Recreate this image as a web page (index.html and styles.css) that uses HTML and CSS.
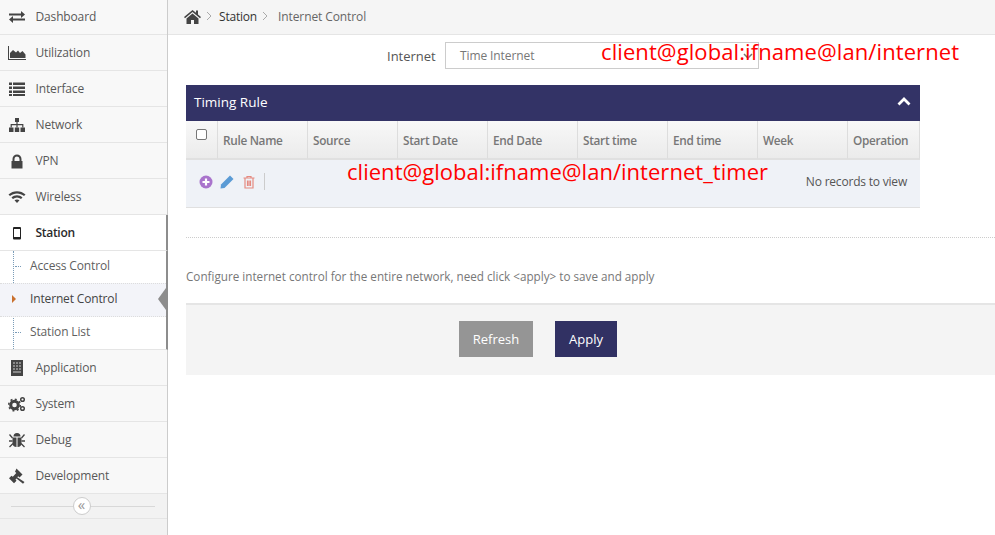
FILE: index.html
```html
<!DOCTYPE html>
<html>
<head>
<meta charset="UTF-8">
<title>Internet Control</title>
<link rel="stylesheet" href="styles.css">
</head>
<body>
	<div class="page">
		<!-- left menu -->
		<div class="sidebar">
			<div class="menu first">
				<svg class="icon" viewBox="0 0 18 18"><path d="M1 5.500h12V3l4 3.500-4 3.500V7.500H1zM17 10.500v2H5V15l-4-3.500L5 8v2.500z" fill="#444"/></svg>
				<span>Dashboard</span>
			</div>
			<div class="menu">
				<svg class="icon" viewBox="0 0 18 18"><path d="M0 2h1v13h17v1H0z" fill="#444"/><path d="M2 14V9l3-3 3 2.500 2-2 2 2.500 2.500-2 3 3.500V14z" fill="#444"/></svg>
				<span>Utilization</span>
			</div>
			<div class="menu">
				<svg class="icon" viewBox="0 0 18 18"><path d="M1 2.500h3v2.500H1zM5 2.500h12v2.500H5zM1 6.500h3V9H1zM5 6.500h12V9H5zM1 10.500h3V13H1zM5 10.500h12V13H5zM1 14h3v2H1zM5 14h12v2H5z" fill="#444"/></svg>
				<span>Interface</span>
			</div>
			<div class="menu">
				<svg class="icon" viewBox="0 0 18 18"><path d="M7 2h4v4H7zM1 11.500h4.500V16H1zM6.800 11.500h4.400V16H6.800zM12.500 11.500H17V16h-4.500z" fill="#444"/><path d="M9 6v5.500M3.200 11.500V8.700h11.600v2.800" fill="none" stroke="#444" stroke-width="1.200"/></svg>
				<span>Network</span>
			</div>
			<div class="menu">
				<svg class="icon" viewBox="0 0 18 18"><path d="M4.500 9V7a4.500 4.500 0 0 1 9 0v2h1v7.500h-11V9zM6.500 9h5V7a2.500 2.500 0 0 0-5 0z" fill="#444"/></svg>
				<span>VPN</span>
			</div>
			<div class="menu">
				<svg class="icon" viewBox="0 0 18 18"><path d="M.5 6.500C5 2 13 2 17.500 6.500l-1.500 1.500C12 4.500 6 4.500 2 8zM3.500 9.500c3-3 8-3 11 0L13 11c-2.500-2-5.500-2-8 0zM6.500 12.300c1.500-1.200 3.500-1.200 5 0L9 15z" fill="#444"/></svg>
				<span>Wireless</span>
			</div>
			<div class="menu active">
				<svg class="icon" viewBox="0 0 18 18"><path d="M6.500 3h5.500a1 1 0 0 1 1 1v10.500a1 1 0 0 1-1 1H6a1 1 0 0 1-1-1V4a1 1 0 0 1 1-1zM6 5v8h6V5z" fill="#222"/></svg>
				<span>Station</span>
			</div>
			<div class="submenu">
				<div class="subitem">Access Control</div>
				<div class="subitem current">Internet Control</div>
				<div class="subitem">Station List</div>
			</div>
			<div class="menu">
				<svg class="icon" viewBox="0 0 18 18"><path d="M3 1h12v16H3z" fill="#444"/><path d="M5 3h2v2H5zM8 3h2v2H8zM11 3h2v2h-2zM5 6h2v2H5zM8 6h2v2H8zM11 6h2v2h-2zM5 9h2v2H5zM8 9h2v2H8zM11 9h2v2h-2zM5 12h8v2H5z" fill="#888"/></svg>
				<span>Application</span>
			</div>
			<div class="menu">
				<svg class="icon" viewBox="0 0 18 18"><circle cx="6.500" cy="10" r="3.800" fill="none" stroke="#444" stroke-width="3"/><circle cx="6.500" cy="10" r="5.800" fill="none" stroke="#444" stroke-width="1.500" stroke-dasharray="2 2.500"/><circle cx="14.500" cy="4.500" r="1.800" fill="none" stroke="#444" stroke-width="1.500"/><circle cx="14.500" cy="13.500" r="1.800" fill="none" stroke="#444" stroke-width="1.500"/></svg>
				<span>System</span>
			</div>
			<div class="menu">
				<svg class="icon" viewBox="0 0 18 18"><path d="M5.500 5.500a3.500 3.500 0 0 1 7 0zM4.500 6.500h4V16c-2.500 0-4-1.500-4-4zM9.500 6.500h4V12c0 2.500-1.500 4-4 4z" fill="#444"/><path d="M1.500 3.500l3 3.500M16.500 3.500l-3 3.500M1 10h3.500M17 10h-3.500M1.500 16l3.500-3.500M16.500 16L13 12.500" stroke="#444" stroke-width="1.300"/></svg>
				<span>Debug</span>
			</div>
			<div class="menu">
				<svg class="icon" viewBox="0 0 18 18"><path d="M8.500 1.500l6 6-3 3-1.300-1.300-1 1L16.500 15l-1.500 1.800-6.500-5.300-1 1 1 1.300-2.500 2.500-5-5 2.500-2.500 1.300 1 3.500-3.800-1.300-1.200z" fill="#444"/></svg>
				<span>Development</span>
			</div>
			<div class="collapse">
				<div class="collapse-btn">«</div>
			</div>
		</div>

		<!-- right content -->
		<div class="content">
			<div class="crumbs">
				<svg class="home" viewBox="0 0 17 15"><path d="M8.500 1L0 8l1 1.200L8.500 3l7.500 6.200L17 8l-3-2.500V1.500h-2v2.300zM2.500 9.500V15h4.500v-4h3v4h4.500V9.500l-6-5z" fill="#444"/></svg>
				<svg class="sep" viewBox="0 0 6 10"><path d="M1 1l4 4-4 4" fill="none" stroke="#aaa"/></svg>
				<span class="crumb">Station</span>
				<svg class="sep" viewBox="0 0 6 10"><path d="M1 1l4 4-4 4" fill="none" stroke="#aaa"/></svg>
				<span class="crumb last">Internet Control</span>
			</div>

			<div class="form-row">
				<label class="form-label">Internet</label>
				<div class="select">
					<span>Time Internet</span>
					<svg class="caret" viewBox="0 0 10 6"><path d="M1 1l4 4 4-4" fill="none" stroke="#777" stroke-width="1.500"/></svg>
				</div>
			</div>

			<div class="panel">
				<div class="panel-head">
					<span>Timing Rule</span>
					<svg class="chevron" viewBox="0 0 14 9"><path d="M1.500 7.500L7 2l5.500 5.500" fill="none" stroke="#fff" stroke-width="2.800"/></svg>
				</div>
				<table class="grid">
					<tr>
						<th class="check"><span class="checkbox"></span></th>
						<th>Rule Name</th>
						<th>Source</th>
						<th>Start Date</th>
						<th>End Date</th>
						<th>Start time</th>
						<th>End time</th>
						<th>Week</th>
						<th class="op">Operation</th>
					</tr>
				</table>
				<div class="toolbar">
					<svg class="tool add" viewBox="0 0 14 14"><circle cx="7" cy="7" r="6.500" fill="#a974cc"/><path d="M3.500 7h7M7 3.500v7" stroke="#fff" stroke-width="2.200"/></svg>
					<svg class="tool" viewBox="0 0 14 14"><path d="M10 .5l3.500 3.500-9 9L.5 13.500l.5-4z" fill="#5b9bd5"/></svg>
					<svg class="tool" viewBox="0 0 14 14"><path d="M1.500 3h11M5 3V1.500h4V3M3 3v10h8V3M5.500 5.500v5.500M7 5.500v5.500M8.500 5.500v5.500" fill="none" stroke="#e58a80" stroke-width="1.200"/></svg>
					<span class="tool-sep"></span>
					<span class="no-records">No records to view</span>
				</div>
			</div>

			<div class="dots"></div>

			<p class="hint">Configure internet control for the entire network, need click &lt;apply&gt; to save and apply</p>

			<div class="actions">
				<button class="btn gray">Refresh</button>
				<button class="btn navy">Apply</button>
			</div>

			<div class="note note-top">client@global:ifname@lan/internet</div>
			<div class="note note-mid">client@global:ifname@lan/internet_timer</div>
		</div>
	</div>
</body>
</html>
```

FILE: styles.css
```css
/* whole page */
* {
	box-sizing: border-box;
}

html, body {
	margin: 0;
	height: 100%;
	overflow: hidden;
}

body {
	font-family: "Open Sans", "Liberation Sans", sans-serif;
	font-size: 13px;
	color: #666;
	background: #fff;
}

.page {
	display: flex;
	height: 535px;
}

/* left menu */
.sidebar {
	width: 168px;
	flex: none;
	font-size: 12px;
	background: #f2f2f2;
	border-right: 1px solid #ccc;
}

.menu {
	display: flex;
	align-items: center;
	height: 36px;
	padding-left: 8px;
	padding-bottom: 1px;
	letter-spacing: -0.150px;
	background: #f8f8f8;
	border-bottom: 1px solid #e5e5e5;
	color: #585858;
}

.menu.first {
	height: 35px;
}

.menu.active {
	background: #fff;
	color: #2b2b2b;
	font-weight: 600;
	letter-spacing: -0.300px;
	margin-right: -1px;
	border-right: 2px solid #8d8d8d;
}

.icon {
	width: 18px;
	height: 18px;
	margin: 1px 9.500px 0 0;
	flex: none;
}

.submenu {
	position: relative;
	background: #fff;
	border-bottom: 1px solid #e5e5e5;
	border-right: 2px solid #8d8d8d;
	margin-right: -1px;
}

.submenu::before {
	content: "";
	position: absolute;
	left: 13px;
	top: 0;
	bottom: 0;
	border-left: 1px dotted #7a9cb8;
}

.subitem {
	position: relative;
	height: 32px;
	line-height: 30px;
	padding-left: 30px;
	letter-spacing: -0.150px;
	color: #5f5f5f;
}

.subitem::before {
	content: "";
	position: absolute;
	left: 15px;
	top: 15px;
	width: 6px;
	border-top: 1px dotted #7a9cb8;
}

.subitem.current {
	height: 34px;
	background: #f3f4f9;
	border-top: 1px dotted #ddd;
	border-bottom: 1px dotted #ddd;
	color: #444;
}

.subitem.current::before {
	left: 12px;
	top: 11px;
	width: 0;
	border-top: 4px solid transparent;
	border-bottom: 4px solid transparent;
	border-left: 4px solid #c9702e;
}

.subitem.current::after {
	content: "";
	position: absolute;
	right: 0;
	top: 4px;
	border-top: 11px solid transparent;
	border-bottom: 11px solid transparent;
	border-right: 8px solid #8d8d8d;
}

.collapse {
	position: relative;
	height: 25px;
	padding-right: 4px;
	display: flex;
	align-items: center;
	justify-content: center;
	border-bottom: 1px solid #e5e5e5;
}

.collapse::before {
	content: "";
	position: absolute;
	left: 11px;
	right: 12px;
	top: 12px;
	border-top: 1px solid #d8d8d8;
}

.collapse-btn {
	position: relative;
	width: 18px;
	height: 18px;
	line-height: 13px;
	text-align: center;
	font-size: 15px;
	color: #999;
	background: #fff;
	border: 1px solid #ccc;
	border-radius: 50%;
}

/* right side */
.content {
	position: relative;
	flex: 1;
	min-width: 0;
}

.crumbs {
	display: flex;
	align-items: center;
	height: 35px;
	padding: 0 0 2px 16px;
	font-size: 12px;
	background: #f5f5f5;
	border-bottom: 1px solid #e5e5e5;
	color: #333;
}

.home {
	width: 17px;
	height: 15px;
	margin-right: 5px;
}

.sep {
	width: 6px;
	height: 10px;
	margin-right: 7px;
}

.crumb {
	margin-right: 5px;
	letter-spacing: -0.200px;
}

.crumb.last {
	margin-left: 3px;
	letter-spacing: -0.100px;
	color: #666;
}

.form-row {
	display: flex;
	align-items: center;
	height: 27px;
	margin-top: 7px;
	padding-left: 219px;
}

.form-label {
	width: 58px;
	color: #555;
}

.select {
	display: flex;
	align-items: center;
	justify-content: space-between;
	width: 314px;
	height: 27px;
	padding: 0 5px 0 14px;
	border: 1px solid #ccc;
	font-size: 12px;
	letter-spacing: -0.100px;
	color: #777;
}

.caret {
	width: 10px;
	height: 6px;
}

.panel {
	width: 734px;
	margin: 16px 0 0 18px;
}

.panel-head {
	display: flex;
	align-items: center;
	justify-content: space-between;
	height: 36px;
	padding: 0 9px 3px 8px;
	background: #333366;
	color: #fff;
	font-size: 13.500px;
}

.chevron {
	width: 14px;
	height: 9px;
}

.grid {
	width: 100%;
	table-layout: fixed;
	border-collapse: separate;
	border-spacing: 0;
}

.grid th {
	height: 39px;
	padding: 1px 0 0 5px;
	text-align: left;
	font-size: 11.800px;
	font-weight: 600;
	letter-spacing: -0.300px;
	color: #777;
	background: linear-gradient(#f8f8f8, #ebebeb);
	border-right: 1px solid #ddd;
	border-bottom: 2px solid #e0e0e0;
}

.grid th.check {
	width: 32px;
	padding: 0 0 10px 10px;
}

.grid th.op {
	width: 72px;
}

.checkbox {
	display: block;
	width: 11px;
	height: 11px;
	background: #fff;
	border: 1px solid #777;
	border-radius: 2px;
}

.toolbar {
	display: flex;
	align-items: center;
	height: 48px;
	padding: 0 13px 4px 13px;
	background: #eff2f7;
	border-bottom: 1px solid #e0e0e0;
}

.tool {
	width: 14px;
	height: 14px;
	margin-right: 8px;
}

.tool.add {
	margin-right: 7px;
}

.tool-sep {
	height: 17px;
	border-left: 1px solid #ccc;
}

.no-records {
	margin-left: auto;
	font-size: 12px;
	letter-spacing: -0.200px;
	color: #555;
}

.dots {
	margin: 29px 0 0 18px;
	border-top: 1px dotted #ccc;
}

.hint {
	margin: 30px 0 0 18px;
	font-size: 11.700px;
	line-height: 17px;
	color: #777;
}

.actions {
	display: flex;
	height: 72px;
	margin: 18px 0 0 18px;
	padding: 16px 0 0 273px;
	background: #f4f4f4;
	border-top: 2px solid #e5e5e5;
}

.btn {
	height: 36px;
	border: 0;
	font-family: inherit;
	font-size: 13px;
	color: #fff;
}

.btn.gray {
	width: 74px;
	margin-right: 22px;
	background: #959595;
}

.btn.navy {
	width: 62px;
	background: #313163;
}

/* red notes pasted over the screenshot */
.note {
	position: absolute;
	font-size: 22px;
	line-height: 30px;
	color: #ff0000;
	white-space: nowrap;
}

.note-top {
	left: 433px;
	top: 36px;
	letter-spacing: 0.090px;
}

.note-mid {
	left: 179px;
	top: 156px;
	letter-spacing: 0.030px;
}
```
